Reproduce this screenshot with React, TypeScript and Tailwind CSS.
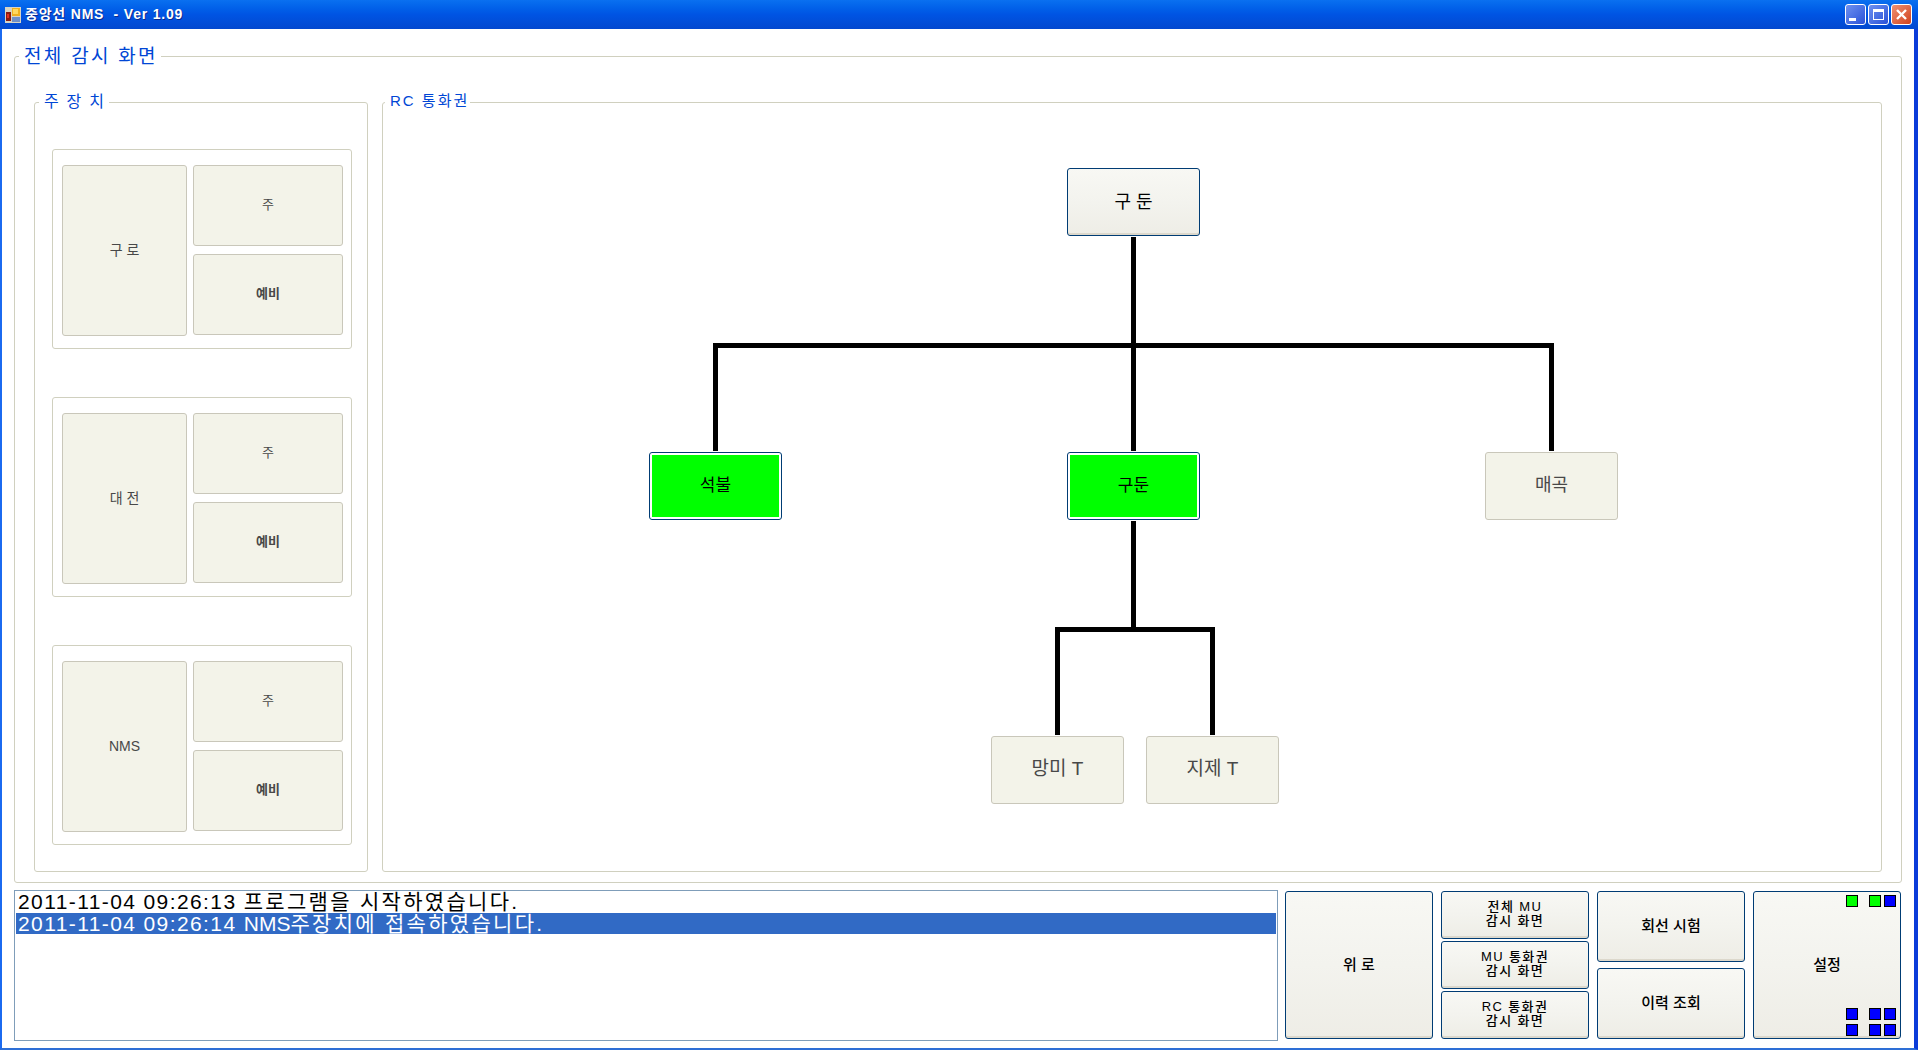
const font = "font-['Liberation_Sans','Noto_Sans_CJK_KR',sans-serif]";

function GroupBox({ title, className, titleClass, children }: { title: string; className: string; titleClass: string; children: React.ReactNode }) {
  return (
    <div className={`relative rounded-[3px] border border-[#d0d0bf] ${className}`}>
      <span className={`absolute bg-white leading-none whitespace-pre text-[#0046d5] ${titleClass}`}>{title}</span>
      {children}
    </div>
  );
}

function XpButton({ className, children }: { className: string; children?: React.ReactNode }) {
  return (
    <div className={`relative flex items-center justify-center rounded-[3px] border border-[#003c74] bg-gradient-to-b from-[#f8f8f4] via-[#f3f3ee] to-[#eeede6] pb-[2px] text-center whitespace-pre text-black shadow-[inset_0_-2px_0_#dcd8cc] ${className}`}>
      {children}
    </div>
  );
}

function FlatButton({ className, children }: { className: string; children: React.ReactNode }) {
  return (
    <div className={`flex items-center justify-center rounded-[3px] border border-[#c9c7ba] bg-[#f3f3e9] pb-[1px] whitespace-pre text-[#484848] ${className}`}>
      {children}
    </div>
  );
}

function GreenNode({ className, label }: { className: string; label: string }) {
  return (
    <div className={`absolute h-[68px] w-[133px] rounded-[3px] border border-[#003c74] bg-white p-[2px] ${className}`}>
      <div className="flex h-full items-center justify-center bg-[#00ff00] text-[17px] font-normal text-black">{label}</div>
    </div>
  );
}

function MainUnit({ name }: { name: string }) {
  return (
    <div className="flex h-[200px] w-[300px] gap-[6px] rounded-[3px] border border-[#d0d0bf] pt-[15px] pl-[9px]">
      <FlatButton className="h-[171px] w-[125px] text-[14px]">{name}</FlatButton>
      <div className="flex flex-col gap-[8px]">
        <FlatButton className="h-[81px] w-[150px] text-[13px]">주</FlatButton>
        <FlatButton className="h-[81px] w-[150px] text-[13px] font-bold">예비</FlatButton>
      </div>
    </div>
  );
}

function Lamp({ on }: { on?: boolean }) {
  return <span className={`h-[12px] w-[12px] border border-black ${on ? "bg-[#00ff00]" : "bg-[#0000ff]"}`} />;
}

function LampRow({ a, b, c }: { a?: boolean; b?: boolean; c?: boolean }) {
  return (
    <div className="flex">
      <Lamp on={a} />
      <span className="w-[11px]" />
      <Lamp on={b} />
      <span className="w-[3px]" />
      <Lamp on={c} />
    </div>
  );
}

function CaptionButton({ close, children }: { close?: boolean; children: React.ReactNode }) {
  return (
    <div className={`flex h-[21px] w-[21px] items-center justify-center rounded-[3px] border border-white ${close ? "bg-gradient-to-br from-[#f09070] to-[#d0401a]" : "bg-gradient-to-br from-[#6f90ef] to-[#2a50d8]"}`}>
      {children}
    </div>
  );
}

export default function App() {
  return (
    <div className={`flex h-[1050px] w-[1918px] flex-col overflow-hidden bg-white ${font}`}>
      {/* Title bar */}
      <div className="flex h-[29px] shrink-0 items-center bg-gradient-to-b from-[#0a70f0] via-[#0054e3] to-[#0248cf] pr-[6px] pl-[5px]">
        <svg width="16" height="16" viewBox="0 0 16 16" className="shrink-0">
          <rect x="0" y="0" width="16" height="16" fill="#d8d4c4" />
          <rect x="1" y="5" width="5" height="9" fill="#8a1a10" />
          <rect x="2" y="7" width="2" height="4" fill="#e03020" />
          <rect x="7" y="1" width="8" height="8" fill="#f0b020" />
          <rect x="8" y="2" width="5" height="5" fill="#ffd860" />
          <rect x="7" y="10" width="8" height="5" fill="#7090c8" />
        </svg>
        <span className="ml-[4px] text-[14px] font-bold tracking-[0.8px] whitespace-pre text-white [text-shadow:1px_1px_0_#0a2a90]">중앙선 NMS  - Ver 1.09</span>
        <div className="ml-auto flex gap-[2px]">
          <CaptionButton>
            <span className="mt-[9px] mr-[6px] h-[3px] w-[7px] bg-white" />
          </CaptionButton>
          <CaptionButton>
            <span className="h-[11px] w-[11px] border border-t-[3px] border-white" />
          </CaptionButton>
          <CaptionButton close>
            <svg width="13" height="13" viewBox="0 0 13 13">
              <path d="M2 2 L11 11 M11 2 L2 11" stroke="#fff" strokeWidth="2.4" fill="none" />
            </svg>
          </CaptionButton>
        </div>
      </div>

      {/* Window body */}
      <div className="flex min-h-0 flex-1 flex-col border-r-4 border-b-2 border-l-2 border-r-[#0a3bd9] border-b-[#2e6fd6] border-l-[#1b6af0] px-[12px] pt-[27px]">
        <GroupBox title="전체 감시 화면" titleClass="top-[-10px] left-[4px] pr-[3px] pl-[5px] text-[19px] tracking-[2.3px]" className="flex h-[827px] shrink-0 gap-[14px] pt-[45px] pr-[19px] pb-[10px] pl-[19px]">
          <GroupBox title="주 장 치" titleClass="top-[-9px] left-[4px] pr-[3px] pl-[5px] text-[16px] tracking-[1.7px]" className="flex w-[334px] flex-col gap-[48px] pt-[46px] pl-[17px]">
            <MainUnit name="구 로" />
            <MainUnit name="대 전" />
            <MainUnit name="NMS" />
          </GroupBox>

          <GroupBox title="RC 통화권" titleClass="top-[-10px] left-[2px] pr-[1px] pl-[5px] text-[15px] tracking-[2px]" className="flex-1">
            <svg width="1496" height="640" className="absolute top-0 left-0" fill="none" stroke="#000" strokeWidth="5">
              <path d="M750.5 134 V348 M332.5 348 V242.5 H1168.5 V348 M750.5 418 V526 M674.5 632 V526.5 H829.5 V632" />
            </svg>
            <XpButton className="absolute top-[65px] left-[684px] h-[68px] w-[133px] pt-[2px] text-[18px]">구 둔</XpButton>
            <GreenNode className="top-[349px] left-[266px]" label="석불" />
            <GreenNode className="top-[349px] left-[684px]" label="구둔" />
            <FlatButton className="absolute top-[349px] left-[1102px] h-[68px] w-[133px] text-[18px]">매곡</FlatButton>
            <FlatButton className="absolute top-[633px] left-[608px] h-[68px] w-[133px] text-[19px]">망미 T</FlatButton>
            <FlatButton className="absolute top-[633px] left-[763px] h-[68px] w-[133px] text-[19px]">지제 T</FlatButton>
          </GroupBox>
        </GroupBox>

        {/* Bottom strip */}
        <div className="mt-[7px] flex h-[151px] shrink-0">
          <div className="w-[1264px] border border-[#7f9db9] px-[1px] pt-[1px] text-[21px] leading-[21px] tracking-[2.3px] whitespace-pre text-black">
            <div className="h-[21px] pl-[2px] leading-[19px]">
              <span className="tracking-[1.4px]">2011-11-04 09:26:13 </span>프로그램을 시작하였습니다.
            </div>
            <div className="h-[21px] bg-[#316ac5] pl-[2px] text-white">
              <span className="tracking-[1.4px]">2011-11-04 09:26:14 </span>
              <span className="tracking-normal">NMS</span>주장치에 접속하였습니다.
            </div>
          </div>
          <div className="mt-[1px] ml-[7px] flex h-[148px] gap-[8px] text-[15px] leading-[13px] font-medium">
            <XpButton className="h-[148px] w-[148px]">위 로</XpButton>
            <div className="flex w-[148px] flex-col justify-between text-[13px] leading-[14px] tracking-[1.4px]">
              <XpButton className="h-[48px]">{"전체 MU\n감시 화면"}</XpButton>
              <XpButton className="h-[48px]">{"MU 통화권\n감시 화면"}</XpButton>
              <XpButton className="h-[48px]">{"RC 통화권\n감시 화면"}</XpButton>
            </div>
            <div className="flex w-[148px] flex-col justify-between">
              <XpButton className="h-[71px]">회선 시험</XpButton>
              <XpButton className="h-[71px]">이력 조회</XpButton>
            </div>
            <XpButton className="h-[148px] w-[148px]">
              설정
              <div className="absolute top-[3px] right-[4px]">
                <LampRow a b />
              </div>
              <div className="absolute right-[4px] bottom-[2px] flex flex-col gap-[4px]">
                <LampRow />
                <LampRow />
              </div>
            </XpButton>
          </div>
        </div>
      </div>
    </div>
  );
}
